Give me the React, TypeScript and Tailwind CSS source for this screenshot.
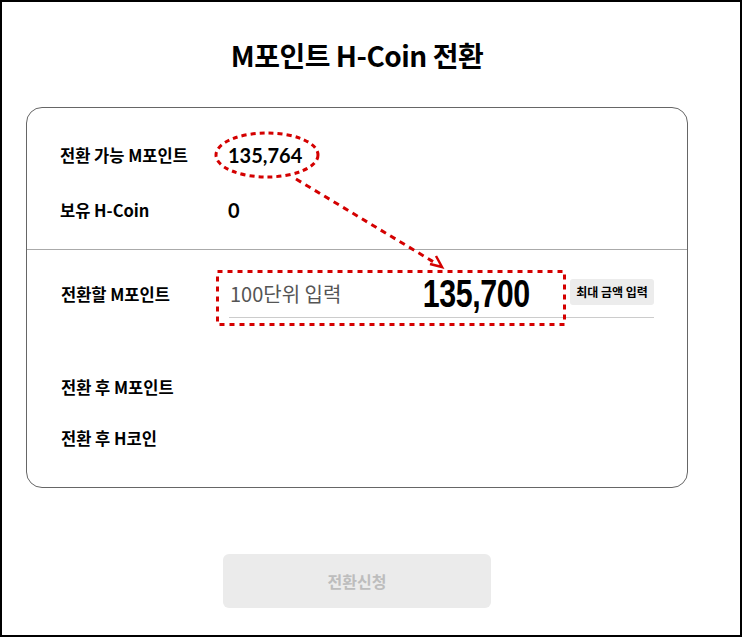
import React from "react";

const kr = { fontFamily: '"Noto Sans CJK KR", "Noto Sans", sans-serif' };

export default function App() {
  return (
    <div className="relative w-[742px] h-[637px] bg-white">
      <div className="w-full h-full border-2 border-black" style={kr}>
        <div className="ml-[24px] w-[662px] flex flex-col items-center">
          <h1 className="mt-[33px] text-[28px] leading-[40px] font-bold text-black tracking-[-0.5px]">M포인트 H-Coin 전환</h1>
          <div className="mt-[32px] w-[662px] h-[381px] border border-[#666] rounded-[16px] flex flex-col">
            <div className="h-[142px] pt-[32px] pl-[33px] flex flex-col gap-[25px] border-b border-[#aaa]">
              <div className="flex items-center h-[30px]">
                <span className="w-[168px] text-[16.5px] font-bold text-black">전환 가능 M포인트</span>
                <span className="text-[20px] font-bold text-black" style={{ fontFamily: 'Lato, "Noto Sans", sans-serif' }}>135,764</span>
              </div>
              <div className="flex items-center h-[30px]">
                <span className="w-[168px] text-[16.5px] font-bold text-black">보유 H-Coin</span>
                <span className="text-[20px] font-bold text-black" style={{ fontFamily: 'Lato, "Noto Sans", sans-serif' }}>0</span>
              </div>
            </div>
            <div className="flex-1 pt-[20px] pl-[34px] flex flex-col">
              <div className="flex items-center h-[48px]">
                <span className="w-[168px] text-[16.5px] font-bold text-black">전환할 M포인트</span>
                <div className="flex items-center w-[425px] h-[48px] border-b border-[#ccc]">
                  <div className="w-[331px] flex items-center justify-between pr-[30px]">
                    <span className="text-[20px] text-[#555] pl-[1px]">100단위 입력</span>
                    <span className="inline-block scale-x-[0.8] origin-right text-[38px] font-bold text-black leading-none tracking-[-0.5px]" style={{ fontFamily: '"Liberation Sans", Arial, sans-serif' }}>135,700</span>
                  </div>
                  <button className="ml-[10px] -mt-[4px] w-[84px] h-[26px] bg-[#ececec] rounded-[3px] text-[12px] font-bold text-black">최대 금액 입력</button>
                </div>
              </div>
              <div className="flex items-center h-[30px] mt-[54px]">
                <span className="text-[16.5px] font-bold text-black">전환 후 M포인트</span>
              </div>
              <div className="flex items-center h-[30px] mt-[21px]">
                <span className="text-[16.5px] font-bold text-black">전환 후 H코인</span>
              </div>
            </div>
          </div>
          <button className="mt-[66px] w-[268px] h-[54px] bg-[#ebebeb] rounded-[6px] text-[16px] font-bold text-[#bdbdbd]">전환신청</button>
        </div>
      </div>
      <svg className="absolute top-0 left-0 pointer-events-none" width="742" height="637" viewBox="0 0 742 637">
        <ellipse cx="267" cy="155" rx="51" ry="22" fill="none" stroke="#d40000" strokeWidth="3" strokeDasharray="5 4" />
        <line x1="296" y1="179" x2="437" y2="264" stroke="#d40000" strokeWidth="3" strokeDasharray="6 5" />
        <path d="M430 264 L442 267 L436 256" fill="none" stroke="#d40000" strokeWidth="2.5" />
        <rect x="217.5" y="271.5" width="347" height="53" fill="none" stroke="#d40000" strokeWidth="3" strokeDasharray="5 5" />
      </svg>
    </div>
  );
}
